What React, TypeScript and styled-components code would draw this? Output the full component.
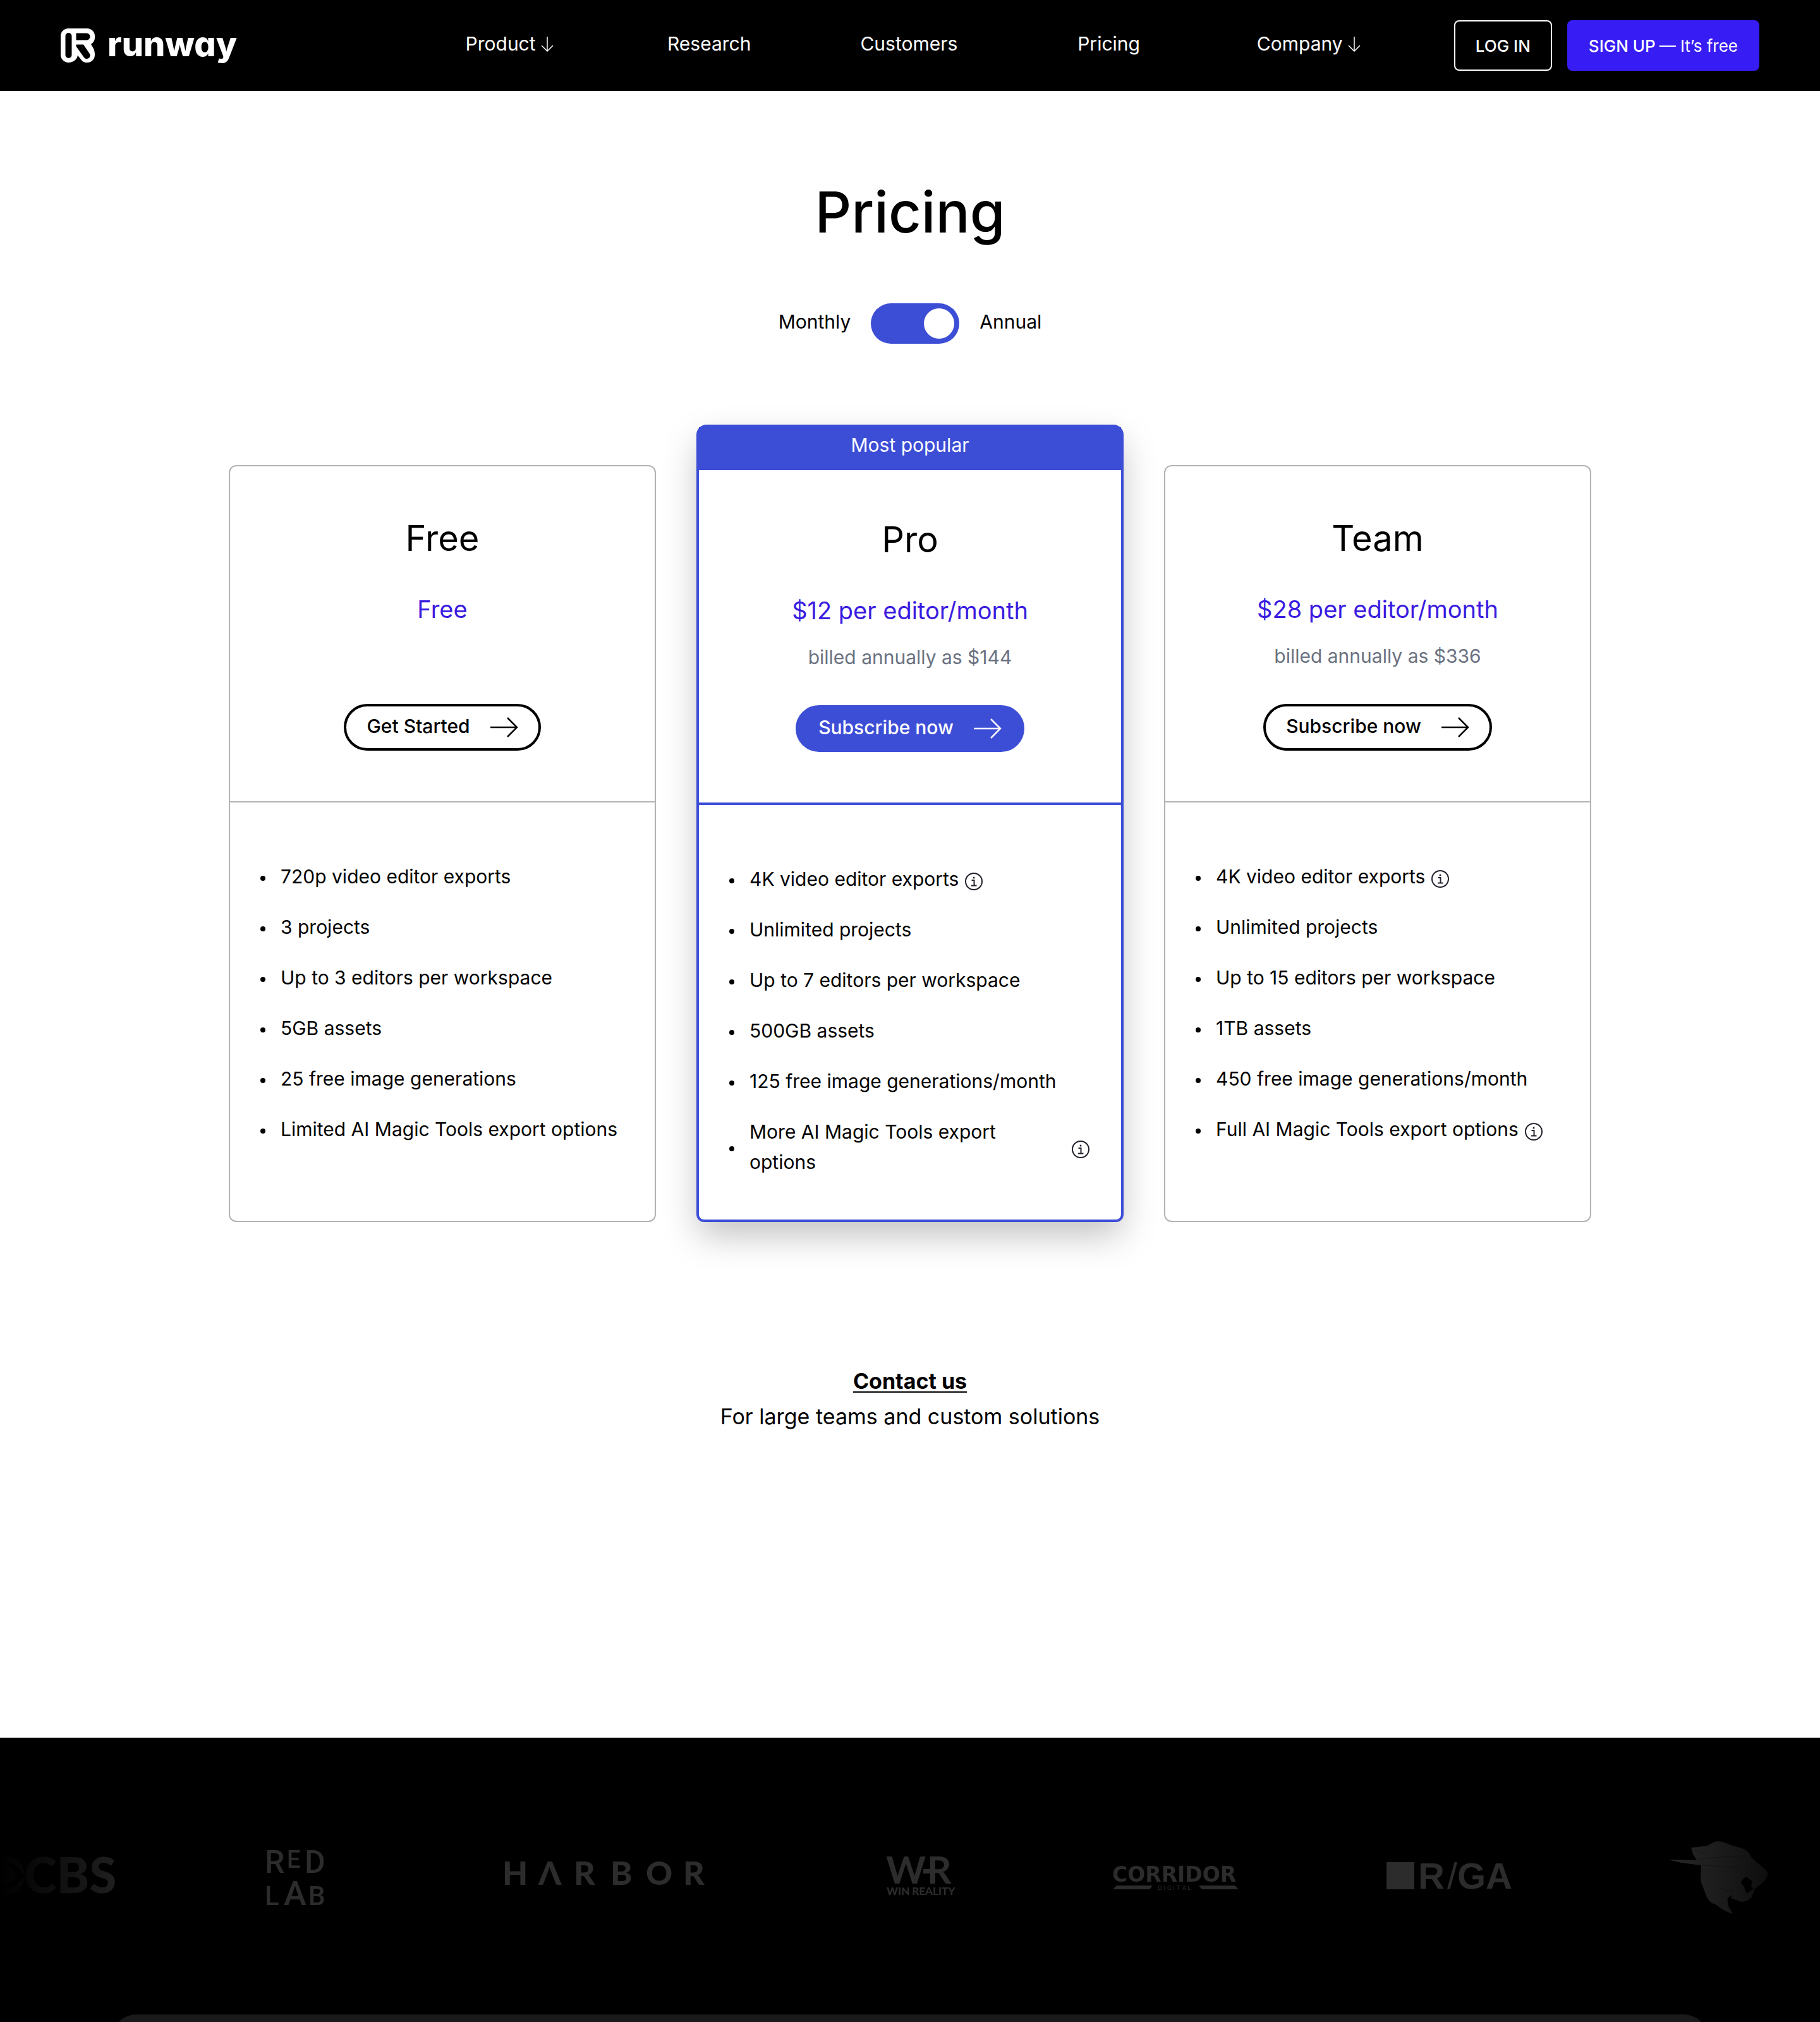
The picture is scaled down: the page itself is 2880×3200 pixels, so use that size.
import React, { useState } from "react";
import styled, { createGlobalStyle, css } from "styled-components";

const color = {
  ink: "#000000",
  paper: "#ffffff",
  violet: "#371df4",
  price: "#3a1be0",
  indigo: "#3d4ed6",
  muted: "#6b7280",
  line: "#b3b3b3",
  icon: "#22222e",
  panel: "#1a1a1a",
  logo: "#2c2c2c",
};

const GlobalStyle = createGlobalStyle`
  *, *::before, *::after { box-sizing: border-box; }
  body {
    margin: 0;
    background: ${color.paper};
    color: ${color.ink};
    font-family: Inter, "Liberation Sans", sans-serif;
    font-size: 30px;
    line-height: 48px;
  }
  h1, h2, p, ul { margin: 0; padding: 0; font-weight: 400; }
  button { font: inherit; cursor: pointer; }
  a { color: inherit; text-decoration: none; }
`;

const Page = styled.div`
  display: flex;
  flex-direction: column;
  min-height: 100vh;
`;

/* ---------- header ---------- */

const Header = styled.header`
  display: flex;
  align-items: center;
  gap: 72px;
  height: 144px;
  padding: 0 96px;
  background: ${color.ink};
  color: ${color.paper};
`;

const Brand = styled.a`
  display: flex;
  align-items: center;
  gap: 20px;
  flex: 0 0 480px;
`;

const Wordmark = styled.span`
  font-size: 54px;
  line-height: 56px;
  font-weight: 800;
  font-feature-settings: "cv11";
  padding-bottom: 4px;
`;

const Nav = styled.nav`
  display: grid;
  grid-template-columns: repeat(5, 1fr);
  flex: 1;
`;

const navItem = css`
  display: flex;
  align-items: center;
  justify-content: center;
  gap: 8px;
  padding: 0 0 6px;
  border: 0;
  background: none;
  color: inherit;
`;

const NavLink = styled.a`
  ${navItem}
`;

const NavMenu = styled.button`
  ${navItem}
`;

const Account = styled.div`
  display: flex;
  gap: 24px;
`;

const AccountLink = styled.a<{ $filled?: boolean }>`
  display: flex;
  align-items: center;
  gap: 6px;
  height: 80px;
  padding: 2px 32px 0;
  border: 2px solid ${(p) => (p.$filled ? color.violet : color.paper)};
  border-radius: 8px;
  background: ${(p) => (p.$filled ? color.violet : "transparent")};
  font-size: 26px;
  font-weight: 500;
  white-space: nowrap;
`;

const Light = styled.span`
  font-weight: 400;
`;

/* ---------- pricing ---------- */

const Main = styled.main`
  display: flex;
  flex-direction: column;
  align-items: center;
  padding: 136px 96px 0;
`;

const Title = styled.h1`
  font-size: 90px;
  line-height: 112px;
  font-weight: 500;
`;

const Billing = styled.label`
  display: flex;
  align-items: center;
  gap: 32px;
  margin-top: 88px;
  cursor: pointer;
`;

const BillingText = styled.span`
  padding-bottom: 6px;
`;

const Switch = styled.input`
  appearance: none;
  display: flex;
  align-items: center;
  width: 140px;
  height: 64px;
  margin: 0;
  padding: 8px;
  border-radius: 32px;
  background: ${color.indigo};
  cursor: pointer;

  &::before {
    content: "";
    width: 48px;
    height: 48px;
    border-radius: 50%;
    background: ${color.paper};
  }

  &:checked {
    justify-content: flex-end;
  }
`;

const Plans = styled.div`
  display: grid;
  grid-template-columns: repeat(3, 1fr);
  gap: 64px;
  width: 100%;
  max-width: 2156px;
  margin-top: 128px;
`;

const Card = styled.section<{ $popular?: boolean }>`
  display: flex;
  flex-direction: column;
  margin-top: ${(p) => (p.$popular ? 0 : 64)}px;
  border: ${(p) => (p.$popular ? `4px solid ${color.indigo}` : `2px solid ${color.line}`)};
  border-radius: ${(p) => (p.$popular ? "16px 16px 12px 12px" : "12px")};
  box-shadow: ${(p) => (p.$popular ? "0 24px 56px -4px rgba(0, 0, 0, 0.25)" : "none")};
`;

const Banner = styled.p`
  height: 68px;
  padding-top: 4px;
  background: ${color.indigo};
  color: ${color.paper};
  text-align: center;
`;

const CardHead = styled.div<{ $popular?: boolean }>`
  display: flex;
  flex-direction: column;
  align-items: center;
  padding: ${(p) => (p.$popular ? 68 : 72)}px 24px 80px;
  border-bottom: ${(p) => (p.$popular ? `4px solid ${color.indigo}` : `2px solid ${color.line}`)};
`;

const PlanName = styled.h2`
  font-size: 56px;
  line-height: 84px;
`;

const Price = styled.p`
  margin-top: 42px;
  font-size: 38px;
  line-height: 56px;
  color: ${color.price};
`;

const Billed = styled.p`
  min-height: 48px;
  margin-top: 22px;
  color: ${color.muted};
`;

const PlanButton = styled.button<{ $filled?: boolean }>`
  display: flex;
  align-items: center;
  gap: 32px;
  height: 74px;
  margin-top: 52px;
  padding: 0 32px;
  border: 4px solid ${(p) => (p.$filled ? color.indigo : color.ink)};
  border-radius: 37px;
  background: ${(p) => (p.$filled ? color.indigo : color.paper)};
  color: ${(p) => (p.$filled ? color.paper : color.ink)};
  font-weight: 500;
`;

const PlanButtonText = styled.span`
  padding-bottom: 4px;
`;

const Features = styled.ul`
  display: flex;
  flex-direction: column;
  gap: 26px;
  padding: 93px 48px 61px;
  list-style: none;
`;

const Feature = styled.li`
  display: flex;
  align-items: center;

  &::before {
    content: "";
    flex: none;
    width: 8px;
    height: 8px;
    margin-right: 24px;
    border-radius: 50%;
    background: ${color.ink};
  }
`;

const FeatureText = styled.span`
  padding-bottom: 6px;
`;

const InfoButton = styled.button`
  display: flex;
  flex: none;
  margin-left: 8px;
  padding: 2px 2px 0;
  border: 0;
  background: none;
  color: ${color.icon};
`;

const Contact = styled.div`
  padding: 224px 0 480px;
  font-size: 34px;
  line-height: 56px;
  text-align: center;
`;

const ContactLink = styled.a`
  font-weight: 700;
  text-decoration: underline;
  text-decoration-thickness: 2px;
  text-underline-offset: 4px;
`;

/* ---------- customers ---------- */

const Customers = styled.section`
  display: flex;
  flex: 1;
  flex-direction: column;
  background: ${color.ink};
`;

const Marquee = styled.div`
  display: flex;
  gap: 200px;
  padding: 160px 0;
  overflow: hidden;
  mask-image: linear-gradient(to right, transparent, #000 9%, #000 91%, transparent);

  svg {
    flex: none;
    overflow: visible;
    fill: ${color.logo};
  }
`;

const PanelPeek = styled.div`
  flex: 1 1 0;
  min-height: 12px;
  padding: 0 176px;
  overflow: hidden;
`;

const Panel = styled.div`
  height: 320px;
  border-radius: 40px;
  background: ${color.panel};
`;

/* ---------- drawings ---------- */

const RunwayMark = () => (
  <svg width="54" height="54" viewBox="0 0 54 54" fill="currentColor" aria-hidden="true">
    <path
      fillRule="evenodd"
      d="M12 0H42A12 12 0 0 1 54 12V14C54 19 52 22 48 25L52 32C53.5 35 54 38 54 42A12 12 0 0 1 42 54C37 54 34 52 32 49L27 42.5C26 49 20 54 12.5 54A12.5 12.5 0 0 1 0 42V12A12 12 0 0 1 12 0ZM12.5 7A5 5 0 0 0 7.5 12V42A5 5 0 0 0 17.5 42V12A5 5 0 0 0 12.5 7ZM24.5 7.5H41A5.5 5.5 0 0 1 41 18.5H24.5ZM24.5 25.5H36L45.5 39.5A5 5 0 0 1 37 46L24.5 28.5Z"
    />
  </svg>
);

const ArrowDown = () => (
  <svg width="20" height="26" viewBox="0 0 20 26" fill="none" stroke="currentColor" strokeWidth="1.5" aria-hidden="true">
    <path d="M10 2v23M1 16l9 9 9-9" />
  </svg>
);

const ArrowRight = () => (
  <svg width="44" height="32" viewBox="0 0 44 32" fill="none" stroke="currentColor" strokeWidth="2.5" aria-hidden="true">
    <path d="M0 16h42M27 1l15 15-15 15" />
  </svg>
);

const InfoIcon = () => (
  <svg width="28" height="28" viewBox="0 0 28 28" fill="none" stroke="currentColor" strokeWidth="2" aria-hidden="true">
    <circle cx="14" cy="14" r="13" />
    <path d="M10.5 12h4v8M10 20.5h8.5" />
    <circle cx="14" cy="8" r="1.5" fill="currentColor" stroke="none" />
  </svg>
);

const CbsLogo = () => (
  <svg width="184" height="118" viewBox="0 0 184 118">
    <path fillRule="evenodd" d="M8 27a31 31 0 1 1 0 62 31 31 0 0 1 0-62zM-24 58c9-13 20-20 32-20s22 7 31 20c-9 13-19 20-31 20s-23-7-32-20z" />
    <circle cx="8" cy="58" r="16" />
    <text x="38" y="86" fontSize="78" fontFamily="Lato, sans-serif" fontWeight="900">CBS</text>
  </svg>
);

const RedLabLogo = () => (
  <svg width="172" height="118" viewBox="0 0 172 118" fontFamily="Roboto, sans-serif" fontWeight="500">
    <text x="35" y="54" fontSize="50">R</text>
    <text x="70" y="46" fontSize="38">E</text>
    <text x="98" y="54" fontSize="50">D</text>
    <text x="35" y="105" fontSize="42">L</text>
    <text x="65" y="105" fontSize="54">A</text>
    <text x="104" y="105" fontSize="42">B</text>
  </svg>
);

const HarborLogo = () => (
  <svg width="402" height="118" viewBox="0 0 402 118">
    <text x="39 96 152 210 266 325" y="73" fontSize="52" fontFamily="Lato, sans-serif" fontWeight="900">HΛRBOR</text>
  </svg>
);

const WinRealityLogo = () => (
  <svg width="198" height="118" viewBox="0 0 198 118">
    <text x="44 109" y="71" fontSize="60" fontFamily="Lato, sans-serif" fontWeight="700">WR</text>
    <rect x="103" y="48" width="14" height="7" />
    <text x="45" y="89" fontSize="17" fontFamily="Lato, sans-serif" fontWeight="900">WIN REALITY</text>
  </svg>
);

const CorridorLogo = () => (
  <svg width="210" height="118" viewBox="0 0 210 118">
    <text x="4" y="68" fontSize="33" fontFamily="DejaVu Sans, sans-serif" fontWeight="700">CORRIDOR</text>
    <path d="M11 74h57l-5 6H5zM141 74h57l6 6h-58z" />
    <text x="76 85 91 100 106 115 123" y="81" fontSize="9" fontFamily="DejaVu Sans, sans-serif">DIGITAL</text>
  </svg>
);

const RgaLogo = () => (
  <svg width="254" height="118" viewBox="0 0 254 118">
    <rect x="28" y="37" width="44" height="43" />
    <text y="79" fontSize="58" fontFamily="Liberation Sans, sans-serif" fontWeight="700">
      <tspan x="78">R</tspan>
      <tspan x="124" fontWeight="400">/</tspan>
      <tspan x="140">GA</tspan>
    </text>
  </svg>
);

const PantherLogo = () => (
  <svg width="198" height="118" viewBox="0 0 198 118">
    <path
      fillRule="evenodd"
      d="M20 33L65 34L59 24L56 14L80 11.5L90 6.5Q97 2 108 5.5L122 11L135 14.5Q145 18 148 23L152 30L163 40L173 48L178 55L174 65L165 73L157 79L154 87Q152 94 146 97Q140 101 134 99.5L119 94L121 89L114 94Q112 106 123 119Q114 117 106 112L95 104L89 102Q84 98 81 93L75 77Q71 69 71 60L72 42L41 38ZM143 60L153 67L151 75L155 79L144 87Q141 80 140 76L135 70Q137 64 143 60Z"
    />
    <path fill="none" stroke="#000" strokeOpacity="0.25" strokeWidth="1.2" d="M66 33Q100 28 142 27M74 42Q100 43 130 46M62 18L80 24M100 76Q112 84 121 84" />
  </svg>
);

/* ---------- content ---------- */

type Item = { text: string; info?: boolean };
type Plan = {
  name: string;
  price: string;
  billed?: string;
  action: string;
  popular?: boolean;
  features: Item[];
};

const plans: Plan[] = [
  {
    name: "Free",
    price: "Free",
    action: "Get Started",
    features: [
      { text: "720p video editor exports" },
      { text: "3 projects" },
      { text: "Up to 3 editors per workspace" },
      { text: "5GB assets" },
      { text: "25 free image generations" },
      { text: "Limited AI Magic Tools export options" },
    ],
  },
  {
    name: "Pro",
    price: "$12 per editor/month",
    billed: "billed annually as $144",
    action: "Subscribe now",
    popular: true,
    features: [
      { text: "4K video editor exports", info: true },
      { text: "Unlimited projects" },
      { text: "Up to 7 editors per workspace" },
      { text: "500GB assets" },
      { text: "125 free image generations/month" },
      { text: "More AI Magic Tools export options", info: true },
    ],
  },
  {
    name: "Team",
    price: "$28 per editor/month",
    billed: "billed annually as $336",
    action: "Subscribe now",
    features: [
      { text: "4K video editor exports", info: true },
      { text: "Unlimited projects" },
      { text: "Up to 15 editors per workspace" },
      { text: "1TB assets" },
      { text: "450 free image generations/month" },
      { text: "Full AI Magic Tools export options", info: true },
    ],
  },
];

const PlanCard = ({ plan }: { plan: Plan }) => (
  <Card $popular={plan.popular}>
    {plan.popular && <Banner>Most popular</Banner>}
    <CardHead $popular={plan.popular}>
      <PlanName>{plan.name}</PlanName>
      <Price>{plan.price}</Price>
      <Billed>{plan.billed}</Billed>
      <PlanButton type="button" $filled={plan.popular}>
        <PlanButtonText>{plan.action}</PlanButtonText>
        <ArrowRight />
      </PlanButton>
    </CardHead>
    <Features>
      {plan.features.map((f) => (
        <Feature key={f.text}>
          <FeatureText>{f.text}</FeatureText>
          {f.info && (
            <InfoButton type="button" aria-label={`About ${f.text}`}>
              <InfoIcon />
            </InfoButton>
          )}
        </Feature>
      ))}
    </Features>
  </Card>
);

export default function App() {
  const [annual, setAnnual] = useState(true);

  return (
    <>
      <GlobalStyle />
      <Page>
        <Header>
          <Brand href="#">
            <RunwayMark />
            <Wordmark>runway</Wordmark>
          </Brand>
          <Nav>
            <NavMenu type="button">
              Product
              <ArrowDown />
            </NavMenu>
            <NavLink href="#">Research</NavLink>
            <NavLink href="#">Customers</NavLink>
            <NavLink href="#">Pricing</NavLink>
            <NavMenu type="button">
              Company
              <ArrowDown />
            </NavMenu>
          </Nav>
          <Account>
            <AccountLink href="#">LOG IN</AccountLink>
            <AccountLink href="#" $filled>
              SIGN UP <Light>— It’s free</Light>
            </AccountLink>
          </Account>
        </Header>

        <Main>
          <Title>Pricing</Title>
          <Billing>
            <BillingText>Monthly</BillingText>
            <Switch
              type="checkbox"
              role="switch"
              checked={annual}
              onChange={(e) => setAnnual(e.target.checked)}
            />
            <BillingText>Annual</BillingText>
          </Billing>
          <Plans>
            {plans.map((plan) => (
              <PlanCard key={plan.name} plan={plan} />
            ))}
          </Plans>
          <Contact>
            <p>
              <ContactLink href="#">Contact us</ContactLink>
            </p>
            <p>For large teams and custom solutions</p>
          </Contact>
        </Main>

        <Customers>
          <Marquee>
            <CbsLogo />
            <RedLabLogo />
            <HarborLogo />
            <WinRealityLogo />
            <CorridorLogo />
            <RgaLogo />
            <PantherLogo />
          </Marquee>
          <PanelPeek>
            <Panel />
          </PanelPeek>
        </Customers>
      </Page>
    </>
  );
}
